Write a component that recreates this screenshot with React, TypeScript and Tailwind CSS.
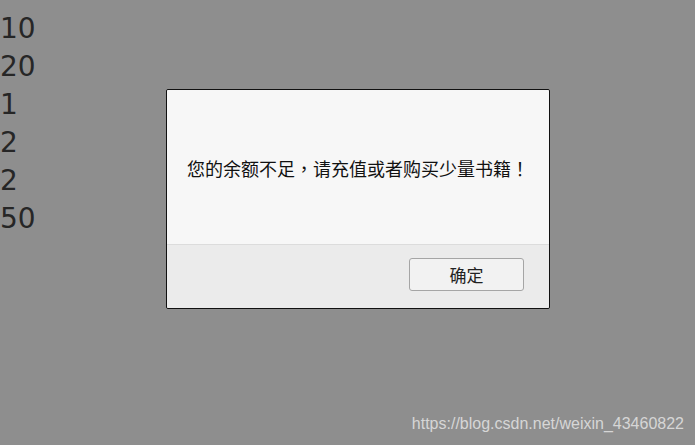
export default function App() {
  const numbers = ["10", "20", "1", "2", "2", "50"];

  return (
    <div className="relative h-[445px] w-[695px] overflow-hidden bg-[#8e8e8e] font-['DejaVu_Sans','Noto_Sans_CJK_SC',sans-serif]">
      {/* page output */}
      <div className="pt-[10px] text-[28px] leading-[38px] text-[#262626]">
        {numbers.map((n, i) => (
          <div key={i}>{n}</div>
        ))}
      </div>

      {/* alert dialog */}
      <div className="absolute left-[166px] top-[89px] flex h-[220px] w-[384px] flex-col overflow-hidden rounded-[2px] border border-[#111]">
        <div className="flex flex-1 items-center justify-center bg-[#f7f7f7] pt-[2px]">
          <p className="font-['Noto_Sans_CJK_SC',sans-serif] text-[18px] text-[#111]">
            您的余额不足
            <span className="font-['Noto_Sans_CJK_TC',sans-serif]">，</span>
            请充值或者购买少量书籍
            <span className="font-['Noto_Sans_CJK_TC',sans-serif]">！</span>
          </p>
        </div>
        <div className="flex h-[64px] items-start justify-end border-t border-[#dcdcdc] bg-[#ebebeb] pr-[25px] pt-[13px]">
          <button className="h-[33px] w-[115px] rounded-[3px] border border-[#a5a5a5] bg-[#f2f2f2] font-['Noto_Sans_CJK_SC',sans-serif] text-[17px] leading-none text-[#222]">
            确定
          </button>
        </div>
      </div>

      {/* watermark */}
      <div className="absolute bottom-[9px] right-[11px] font-['Liberation_Sans',sans-serif] text-[16px] text-[#d6d6d6]">
        https://blog.csdn.net/weixin_43460822
      </div>
    </div>
  );
}
